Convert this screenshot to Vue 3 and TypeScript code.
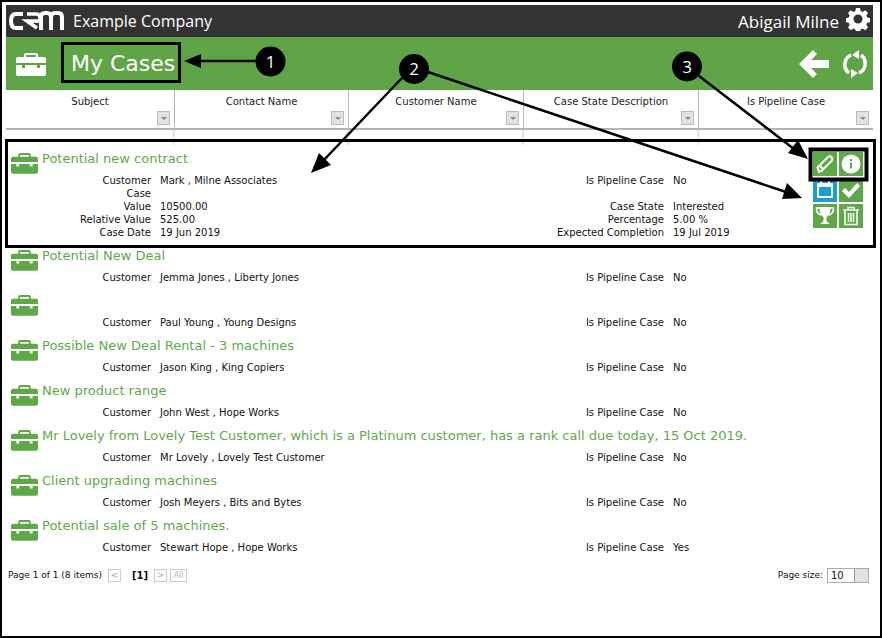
<script setup lang="ts">
interface Field { label: string; value: string }
interface CaseRow { title: string; left: Field[]; right: Field[]; actions?: boolean }
const cols: string[] = ['Subject', 'Contact Name', 'Customer Name', 'Case State Description', 'Is Pipeline Case']
const pipe = (v: string): Field[] => [{ label: 'Is Pipeline Case', value: v }]
const cust = (v: string): Field[] => [{ label: 'Customer', value: v }]
const rows: CaseRow[] = [
  {
    title: 'Potential new contract',
    actions: true,
    left: [
      { label: 'Customer', value: 'Mark , Milne Associates' },
      { label: 'Case', value: '' },
      { label: 'Value', value: '10500.00' },
      { label: 'Relative Value', value: '525.00' },
      { label: 'Case Date', value: '19 Jun 2019' },
    ],
    right: [
      { label: 'Is Pipeline Case', value: 'No' },
      { label: '', value: '' },
      { label: 'Case State', value: 'Interested' },
      { label: 'Percentage', value: '5.00 %' },
      { label: 'Expected Completion', value: '19 Jul 2019' },
    ],
  },
  { title: 'Potential New Deal', left: cust('Jemma Jones , Liberty Jones'), right: pipe('No') },
  { title: '', left: cust('Paul Young , Young Designs'), right: pipe('No') },
  { title: 'Possible New Deal Rental - 3 machines', left: cust('Jason King , King Copiers'), right: pipe('No') },
  { title: 'New product range', left: cust('John West , Hope Works'), right: pipe('No') },
  { title: 'Mr Lovely from Lovely Test Customer, which is a Platinum customer, has a rank call due today, 15 Oct 2019.', left: cust('Mr Lovely , Lovely Test Customer'), right: pipe('No') },
  { title: 'Client upgrading machines', left: cust('Josh Meyers , Bits and Bytes'), right: pipe('No') },
  { title: 'Potential sale of 5 machines.', left: cust('Stewart Hope , Hope Works'), right: pipe('Yes') },
]
const fieldPairs = (r: CaseRow): Field[] => r.left.flatMap((f, i) => [f, r.right[i]])
</script>

<template>
  <div class="frame">
    <header class="topbar">
      <svg class="logo" width="56" height="20" viewBox="0 0 56 20" fill="none" stroke="#fff" stroke-width="4">
        <path d="M14 3H7Q2 3 2 10T7 17H14" />
        <path d="M18 3H27Q31 3 31 7T27 10H18L28 17" stroke-width="3.6" />
        <path d="M32 19V6Q32 2 36 2H38Q42 2 42 6V19M42 6Q42 2 46 2H49Q53 2 53 6V19" />
      </svg>
      <span class="company">Example Company</span>
      <span class="user">Abigail Milne</span>
      <svg class="gear" width="24" height="24" viewBox="0 0 24 24">
        <path fill="#fff" fill-rule="evenodd" d="M10 1h4l.6 3 2 .9 2.600-1.700 2.800 2.800-1.700 2.600.9 2 3 .6v4l-3 .6-.9 2 1.700 2.600-2.800 2.800-2.600-1.700-2 .9-.6 3h-4l-.6-3-2-.9-2.600 1.700-2.800-2.800 1.700-2.600-.9-2-3-.6v-4l3-.6.9-2-1.700-2.600 2.800-2.800 2.600 1.700 2-.9zM12 7.500a4.500 4.500 0 1 0 0 9 4.500 4.500 0 0 0 0-9z" />
      </svg>
    </header>

    <div class="titlebar">
      <svg class="case-big" width="30" height="24" viewBox="0 0 30 24">
        <path fill="#fff" d="M10 1h10q2 0 2 2v2h6q2 0 2 2v4H0V7q0-2 2-2h6V3q0-2 2-2zm0 2v2h10V3zM0 13h6v3h3v-3h12v3h3v-3h6v9q0 2-2 2H2q-2 0-2-2z" />
      </svg>
      <h1 class="title">My Cases</h1>
      <svg class="back" width="30" height="28" viewBox="0 0 30 28">
        <path fill="#fff" d="M0 14 14 0l4 4-6 6h18v8H12l6 6-4 4z" />
      </svg>
      <svg class="refresh" width="26" height="28" viewBox="0 0 26 28" fill="none" stroke="#fff" stroke-width="3.500">
        <path d="M7 23A10.500 10.500 0 0 1 9 5" />
        <path d="M19 5A10.500 10.500 0 0 1 17 23" />
        <path fill="#fff" stroke="none" d="M17 0v9l-7-4zM9 28v-9l7 4z" />
      </svg>
    </div>

    <div class="thead">
      <div v-for="c in cols" :key="c" class="th">
        <span class="th-label">{{ c }}</span>
        <span class="filter"><i></i></span>
      </div>
    </div>
    <div class="filters"><span v-for="c in cols" :key="c"></span></div>

    <div v-for="(r, i) in rows" :key="i" class="row">
      <div class="row-main">
        <div class="row-head">
          <svg class="case" width="27" height="22" viewBox="0 0 30 24">
            <path fill="#5fa84a" d="M10 1h10q2 0 2 2v2h6q2 0 2 2v4H0V7q0-2 2-2h6V3q0-2 2-2zm0 2v2h10V3zM0 13h6v3h3v-3h12v3h3v-3h6v9q0 2-2 2H2q-2 0-2-2z" />
          </svg>
          <span class="row-title">{{ r.title }}</span>
        </div>
        <div class="fields">
          <span v-for="(f, j) in fieldPairs(r)" :key="j" class="pair" :class="{ second: j % 2 === 1 }">
            <span class="lab">{{ f.label }}</span><span class="val">{{ f.value }}</span>
          </span>
        </div>
      </div>
      <div v-if="r.actions" class="actions">
        <span class="act">
          <svg width="20" height="20" viewBox="0 0 20 20" fill="none" stroke="#fff" stroke-width="2"><path d="M4 18 2.500 13.500 13 3q2-1.500 3.500 0T17 6.500L6.500 17zM5 12l3 3" /></svg>
        </span>
        <span class="act">
          <svg width="20" height="20" viewBox="0 0 20 20"><circle cx="10" cy="10" r="9.500" fill="#fff" /><rect x="9" y="8.500" width="2" height="6" fill="#5fa84a" /><rect x="9" y="5" width="2" height="2" fill="#5fa84a" /></svg>
        </span>
        <span class="act blue">
          <svg width="18" height="18" viewBox="0 0 18 18"><path fill="#fff" fill-rule="evenodd" d="M2 2h2V0h2v2h6V0h2v2h2q1 0 1 1v13q0 1-1 1H2q-1 0-1-1V3q0-1 1-1zm1 4v9h12V6z" /></svg>
        </span>
        <span class="act">
          <svg width="20" height="20" viewBox="0 0 20 20"><path fill="#fff" d="M1 11l3-3 4 4 8-9 3 3L8 18z" /></svg>
        </span>
        <span class="act">
          <svg width="20" height="20" viewBox="0 0 20 20" fill="none" stroke="#fff" stroke-width="1.500"><path d="M5 2H1.500Q1 7 6 9M15 2h3.500Q19 7 14 9" /><path fill="#fff" stroke="none" d="M4.500 1h11q0 8-4 10v4l3 3H5.500l3-3v-4q-4-2-4-10z" /></svg>
        </span>
        <span class="act">
          <svg width="20" height="20" viewBox="0 0 20 20" fill="none" stroke="#fff" stroke-width="1.500"><path d="M2 4h16M7 4V1.500h6V4M4 4v14.500h12V4M7.500 7v9M10 7v9M12.500 7v9" /></svg>
        </span>
      </div>
    </div>

    <div class="pager">
      <span class="info">Page 1 of 1 (8 items)</span>
      <span class="pbtn">&lt;</span>
      <b class="cur">[1]</b>
      <span class="pbtn">&gt;</span>
      <span class="pbtn all">All</span>
      <span class="size-label">Page size:</span>
      <span class="size"><span>10</span><i class="size-btn"></i></span>
    </div>

    <svg class="notes" width="882" height="638" viewBox="0 0 882 638" fill="none">
      <rect x="62.500" y="43.500" width="117" height="38" stroke="#000" stroke-width="3" />
      <rect x="6.500" y="140.500" width="868" height="106" stroke="#000" stroke-width="3" />
      <rect x="810.500" y="149.500" width="56" height="30" stroke="#000" stroke-width="4" />
      <g stroke="#000" stroke-width="2.500">
        <path d="M256 61H198" />
        <path d="M402 78 322 162" />
        <path d="M428 72 786 192" />
        <path d="M699 76 794 149" />
      </g>
      <g fill="#000">
        <path d="M184 61 201 54V68z" />
        <path d="M311 173 319 153 331 165z" />
        <path d="M802 198 782 199 787 183z" />
        <path d="M808 159 788 153 798 140z" />
        <circle cx="270.500" cy="61.500" r="15" />
        <circle cx="414" cy="69" r="15" />
        <circle cx="687" cy="66.500" r="15" />
      </g>
      <g fill="#fff" font-family="'Open Sans', sans-serif" font-size="17" text-anchor="middle">
        <text x="270.500" y="67.500">1</text>
        <text x="414" y="75">2</text>
        <text x="687" y="72.500">3</text>
      </g>
    </svg>
  </div>
</template>

<style>
html, body { margin: 0; background: #fff; }
</style>

<style scoped>
.frame {
  position: relative;
  box-sizing: border-box;
  width: 882px;
  height: 638px;
  border: 2px solid #000;
  padding: 3px 7px 0 4px;
  background: #fff;
  font-family: "DejaVu Sans", Verdana, sans-serif;
  font-size: 10px;
  color: #111;
  overflow: hidden;
}
.topbar {
  display: flex;
  align-items: center;
  height: 32px;
  background: #333;
  color: #fff;
  font-family: "Open Sans", sans-serif;
}
.logo { margin-left: 3px; }
.company { margin-left: 8px; font-size: 16px; }
.user { margin-left: auto; font-size: 17px; }
.gear { margin: 0 3px 4px 7px; }
.titlebar {
  display: flex;
  align-items: center;
  height: 53px;
  background: #5fa548;
}
.case-big { margin-left: 10px; }
.title {
  margin: 0 0 0 25px;
  font-size: 22px;
  font-weight: 400;
  color: #fff;
}
.back { margin-left: auto; }
.refresh { margin: 0 5px 0 13px; }
.thead {
  display: grid;
  grid-template-columns: 169px 174px 175px 175px 174px;
  height: 38px;
  border-bottom: 2px solid #b5b5b5;
  box-sizing: content-box;
}
.th {
  position: relative;
  display: flex;
  flex-direction: column;
  align-items: center;
  padding: 5px 4px 0;
  border-right: 1px solid #b5b5b5;
  color: #222;
}
.th:last-child { border-right: 0; }
.th-label { line-height: 13px; }
.filter {
  display: block;
  align-self: flex-end;
  box-sizing: border-box;
  width: 13px;
  height: 14px;
  margin-top: 3px;
  background: #e2e2e2;
  border: 1px solid #bbb;
}
.filter i {
  display: block;
  width: 0;
  height: 0;
  margin: 5px auto 0;
  border: 3px solid transparent;
  border-top: 3px solid #888;
  border-bottom: 0;
}
.filters {
  display: grid;
  grid-template-columns: 169px 174px 175px 175px 174px;
  height: 15px;
}
.filters span { border-right: 2px solid #e4e4e4; }
.filters span:last-child { border-right: 0; }
.row { display: flex; }
.row-main { flex: 1; padding-bottom: 3px; }
.row-head {
  display: flex;
  align-items: flex-start;
  height: 29px;
}
.case { margin: 7px 0 0 5px; }
.row-title {
  margin: 6px 0 0 4px;
  font-size: 13px;
  line-height: 16px;
  color: #5fa84a;
}
.fields {
  display: grid;
  grid-template-columns: 1fr;
}
.fields {
  grid-template-columns: 145px 375px 120px 1fr;
  column-gap: 9px;
  line-height: 13px;
}
.pair { display: contents; }
.lab { text-align: right; }
.actions {
  display: grid;
  grid-template-columns: 24px 24px;
  grid-auto-rows: 24px;
  gap: 2px;
  margin: 7px 10px 0 0;
  align-self: flex-start;
}
.act {
  display: flex;
  align-items: center;
  justify-content: center;
  background: #5fa84a;
}
.act.blue { background: #1b9ed0; }
.pager {
  display: flex;
  align-items: center;
  height: 16px;
  margin-top: 10px;
  padding-left: 2px;
  font-size: 9px;
}
.info { margin-right: 6px; }
.pbtn {
  box-sizing: border-box;
  width: 13px;
  height: 13px;
  margin-right: 6px;
  border: 1px solid #ccc;
  color: #bbb;
  line-height: 11px;
  text-align: center;
  font-weight: 700;
}
.pbtn.all { width: 17px; margin-left: -3px; font-size: 8px; font-weight: 400; }
.cur { margin: 0 6px 0 5px; font-size: 10px; }
.size-label { margin-left: auto; }
.size {
  display: flex;
  align-items: center;
  box-sizing: border-box;
  width: 42px;
  height: 15px;
  margin: 0 4px 0 4px;
  padding-left: 3px;
  border: 1px solid #aaa;
  font-size: 10px;
}
.size span { flex: 1; }
.size-btn {
  width: 13px;
  height: 13px;
  background: #e2e2e2;
  border-left: 1px solid #999;
}
.notes {
  position: absolute;
  left: -2px;
  top: -2px;
  pointer-events: none;
}
</style>
